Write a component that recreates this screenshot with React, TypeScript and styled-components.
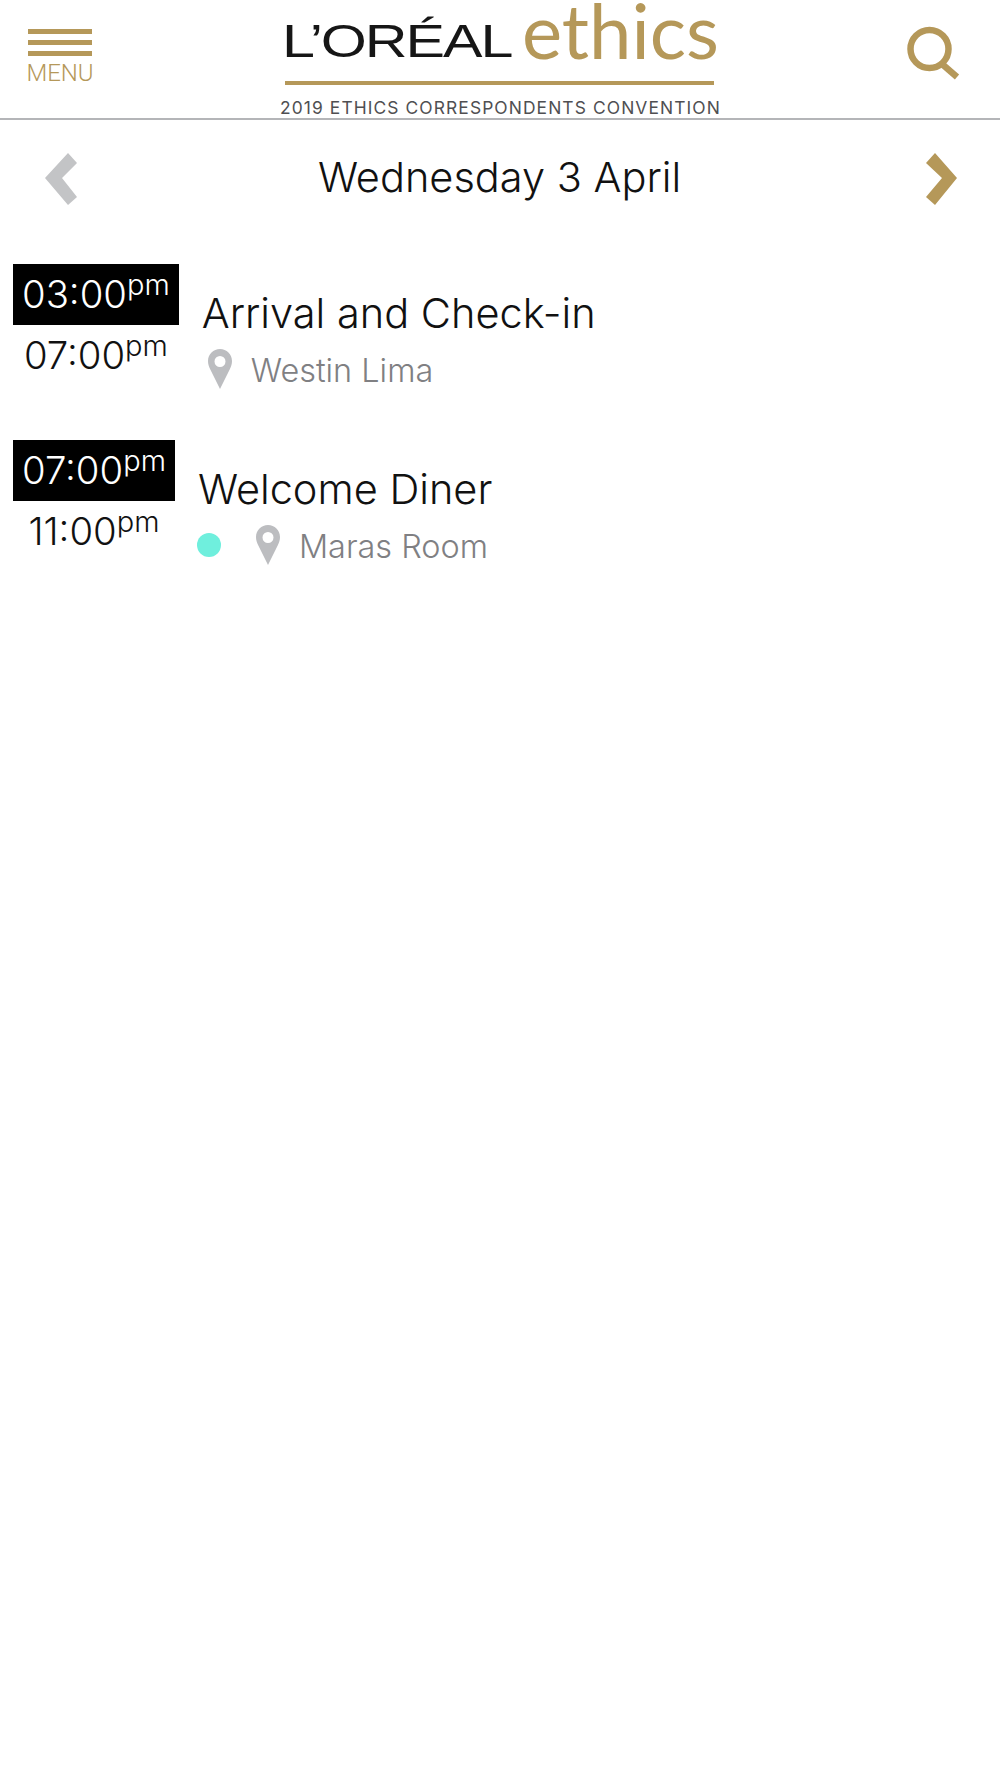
import React from "react";
import styled, { createGlobalStyle } from "styled-components";

const Global = createGlobalStyle`
  html, body { margin: 0; padding: 0; background: #fff; }
  body { font-family: Inter, "Liberation Sans", sans-serif; }
`;

const GOLD = "#b59859";

const Page = styled.div`
  width: 1000px;
  min-height: 1778px;
  background: #fff;
  overflow: hidden;
`;

const Header = styled.header`
  height: 118px;
  border-bottom: 2px solid #b4b5b8;
  display: flex;
  align-items: flex-start;
  justify-content: space-between;
  padding: 0 39px 0 27px;
`;

const MenuButton = styled.div`
  width: 66px;
  padding-top: 29px;
  display: flex;
  flex-direction: column;
  align-items: center;
`;

const MenuBar = styled.span`
  display: block;
  width: 64px;
  height: 5px;
  margin-bottom: 6px;
  background: ${GOLD};
`;

const MenuLabel = styled.span`
  font-family: Roboto, sans-serif;
  font-weight: 300;
  font-size: 24px;
  line-height: 24px;
  margin-top: -1px;
  color: ${GOLD};
`;

const Logo = styled.div`
  width: 441px;
  margin-left: 3px;
  display: flex;
  flex-direction: column;
  align-items: stretch;
`;

const LogoTop = styled.div`
  height: 80px;
  display: flex;
  align-items: flex-end;
  padding-left: 5px;
  white-space: nowrap;
`;

const Brand = styled.span`
  font-family: "Liberation Sans", Arial, sans-serif;
  font-size: 47px;
  line-height: 47px;
  margin: 0 0 16px -3px;
  color: #161616;
  letter-spacing: -1.6px;
  transform: scaleX(1.26);
  transform-origin: left center;
  width: 240px;
`;

const Ethics = styled.span`
  font-family: Lato, sans-serif;
  font-weight: 400;
  font-size: 76px;
  line-height: 59px;
  margin-bottom: 21px;
  color: ${GOLD};
`;

const LogoRule = styled.div`
  height: 4px;
  margin: 1px 7px 0 5px;
  background: ${GOLD};
`;

const LogoSub = styled.div`
  font-family: Inter, sans-serif;
  font-size: 17.4px;
  line-height: 20px;
  letter-spacing: 1.1px;
  margin-top: 13px;
  white-space: nowrap;
  color: #4f4f52;
`;

const SearchBox = styled.div`
  padding-top: 25px;
  line-height: 0;
`;

const DateBar = styled.div`
  height: 118px;
  display: flex;
  align-items: center;
  justify-content: space-between;
  padding: 0 42px 0 45px;
`;

const DateTitle = styled.h1`
  margin: -4px 4px 0 0;
  font-weight: 300;
  font-size: 41.5px;
  line-height: 56px;
  color: #111;
`;

const Agenda = styled.div`
  display: flex;
  flex-direction: column;
  gap: 115px;
  padding: 26px 0 0 13px;
`;

const Row = styled.div`
  display: flex;
  align-items: flex-start;
  gap: 23px;
  height: 61px;
`;

const TimeColumn = styled.div`
  display: flex;
  flex-direction: column;
  align-items: center;
`;

const StartTime = styled.div`
  height: 61px;
  box-sizing: border-box;
  padding: 0 9px 2px;
  display: flex;
  align-items: center;
  background: #000;
  color: #fff;
  font-size: 38.3px;
  font-weight: 300;
  white-space: nowrap;
`;

const EndTime = styled.div`
  height: 61px;
  box-sizing: border-box;
  padding-bottom: 2px;
  display: flex;
  align-items: center;
  color: #111;
  font-size: 38.3px;
  font-weight: 300;
  white-space: nowrap;
`;

const Suffix = styled.span`
  font-size: 29px;
  line-height: 20px;
  position: relative;
  top: -9px;
`;

const Details = styled.div`
  display: flex;
  flex-direction: column;
  padding-top: 21px;
`;

const Title = styled.div`
  font-size: 41.5px;
  font-weight: 300;
  line-height: 56px;
  color: #111;
  white-space: nowrap;
`;

const Place = styled.div<{ $inset: number }>`
  display: flex;
  align-items: center;
  height: 46px;
  margin-top: 5px;
  padding-left: ${(p) => p.$inset}px;
  font-size: 32.4px;
  font-weight: 300;
  color: #808083;
  white-space: nowrap;
`;

const PlaceName = styled.span`
  margin-top: 3px;
`;

const Dot = styled.span`
  width: 24px;
  height: 24px;
  border-radius: 50%;
  background: #6fefdd;
  margin-right: 35px;
  margin-left: -1px;
`;

const PinWrap = styled.span`
  display: inline-flex;
  margin-right: 19px;
  line-height: 0;
`;

const Pin = () => (
  <PinWrap>
    <svg width="24" height="40" viewBox="0 0 24 40">
      <path
        fillRule="evenodd"
        fill="#bcbdc0"
        d="M12 0C5.4 0 0 5.300 0 12c0 3 .9 5.600 2.200 8.200L12 40l9.800-19.800C23.100 17.600 24 15 24 12 24 5.300 18.600 0 12 0zm0 7a5.500 5.500 0 1 1 0 11 5.500 5.500 0 0 1 0-11z"
      />
    </svg>
  </PinWrap>
);

const Chevron = ({ dir, color }: { dir: "l" | "r"; color: string }) => (
  <svg width="33" height="54" viewBox="0 0 33 54">
    <path
      fill={color}
      d={
        dir === "l"
          ? "M0 26 L23 1 L32 11 L17 26 L32 45 L23 53 Z"
          : "M1 11 L10 1 L32 26 L10 53 L1 45 L17 26 Z"
      }
    />
  </svg>
);

const Time = ({ value }: { value: string }) => (
  <>
    {value}
    <Suffix>pm</Suffix>
  </>
);

export default function App() {
  return (
    <Page>
      <Global />
      <Header>
        <MenuButton>
          <MenuBar />
          <MenuBar />
          <MenuBar />
          <MenuLabel>MENU</MenuLabel>
        </MenuButton>
        <Logo>
          <LogoTop>
            <Brand>L’ORÉAL</Brand>
            <Ethics>ethics</Ethics>
          </LogoTop>
          <LogoRule />
          <LogoSub>2019 ETHICS CORRESPONDENTS CONVENTION</LogoSub>
        </Logo>
        <SearchBox>
          <svg width="56" height="56" viewBox="0 0 56 56" fill="none" stroke={GOLD}>
            <circle cx="24.500" cy="24" r="19" strokeWidth="6.500" />
            <path d="M37 39 L52 52" strokeWidth="6.500" />
          </svg>
        </SearchBox>
      </Header>
      <DateBar>
        <Chevron dir="l" color="#c3c4c6" />
        <DateTitle>Wednesday 3 April</DateTitle>
        <Chevron dir="r" color={GOLD} />
      </DateBar>
      <Agenda>
        <Row>
          <TimeColumn>
            <StartTime>
              <Time value="03:00" />
            </StartTime>
            <EndTime>
              <Time value="07:00" />
            </EndTime>
          </TimeColumn>
          <Details>
            <Title>Arrival and Check-in</Title>
            <Place $inset={6}>
              <Pin />
              <PlaceName>Westin Lima</PlaceName>
            </Place>
          </Details>
        </Row>
        <Row>
          <TimeColumn>
            <StartTime>
              <Time value="07:00" />
            </StartTime>
            <EndTime>
              <Time value="11:00" />
            </EndTime>
          </TimeColumn>
          <Details>
            <Title>Welcome Diner</Title>
            <Place $inset={0}>
              <Dot />
              <Pin />
              <PlaceName>Maras Room</PlaceName>
            </Place>
          </Details>
        </Row>
      </Agenda>
    </Page>
  );
}
